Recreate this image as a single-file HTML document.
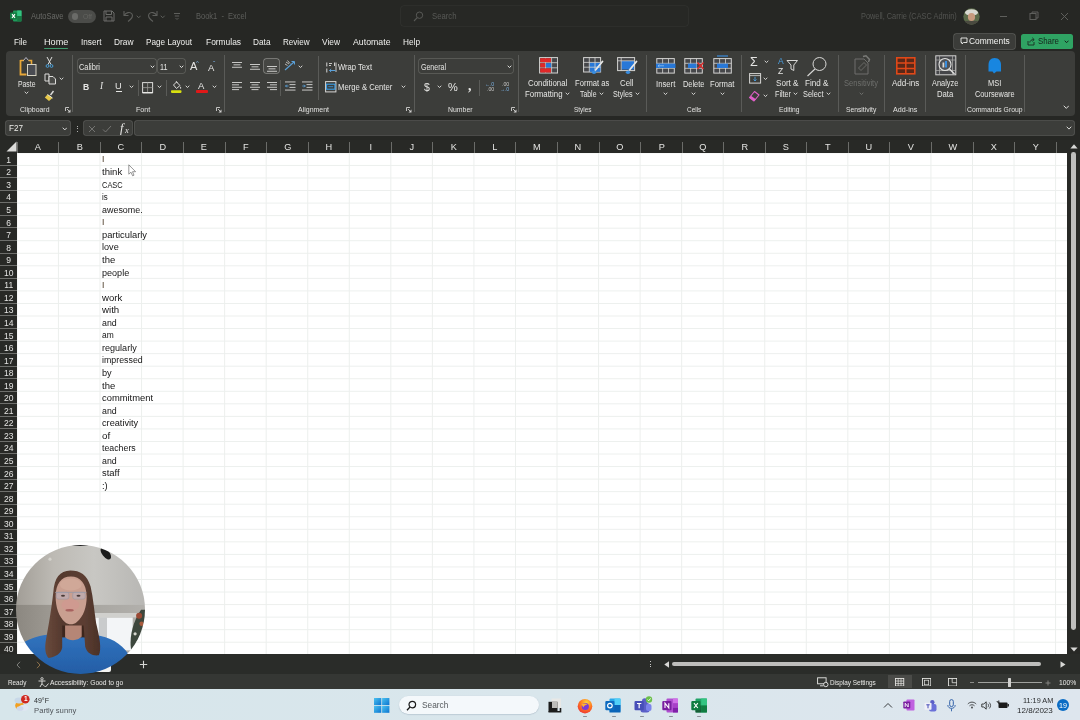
<!DOCTYPE html>
<html lang="en"><head><meta charset="utf-8"><title>Book1 - Excel</title>
<style>
html,body{margin:0;padding:0;}
body{width:1080px;height:720px;overflow:hidden;position:relative;background:#262724;font-family:"Liberation Sans", sans-serif;}
#root{position:absolute;left:0;top:0;width:1080px;height:720px;overflow:hidden;}
#root div,#root svg,#root span{position:absolute;display:block;}
#root span{white-space:pre;line-height:1;transform-origin:0 50%;}
</style></head><body><div id="root">
<div style="left:5.5px;top:51px;width:1069px;height:64.6px;background:#3c3d3a;border-radius:4px;"></div>
<div style="left:5.7px;top:121.4px;width:64.6px;height:13.8px;background:#3c3d3a;border-radius:2px;box-shadow:0 0 0 0.8px #585956;"></div>
<div style="left:84.2px;top:121.4px;width:47.6px;height:13.8px;background:#3c3d3a;border-radius:2px;box-shadow:0 0 0 0.8px #585956;"></div>
<div style="left:134.7px;top:121.4px;width:939.3px;height:13.8px;background:#3c3d3a;border-radius:2px;box-shadow:0 0 0 0.8px #585956;"></div>
<div style="left:0px;top:140px;width:1080px;height:12.5px;background:#282926;"></div>
<div style="left:0px;top:152.5px;width:17.2px;height:501.7px;background:#282926;"></div>
<div style="left:17.2px;top:152.5px;width:1050.1px;height:501.7px;background:#ffffff;background-image:linear-gradient(to right,#ecefed 0.8px,transparent 0.8px),linear-gradient(to bottom,#ecefed 0.8px,transparent 0.8px);background-size:41.56px 100%,100% 12.554px;background-position:40.96px 0,0 11.954px;"></div>
<div style="left:1067.3px;top:140px;width:12.7px;height:514.2px;background:#282926;"></div>
<div style="left:0px;top:654.2px;width:1080px;height:20.2px;background:#2a2c29;"></div>
<div style="left:0px;top:674.3px;width:1080px;height:14.4px;background:#353734;"></div>
<div style="left:0px;top:688.6px;width:1080px;height:31.4px;background:#dae6ec;background-image:linear-gradient(to right,#d7e6eb 0%,#d9e6ec 50%,#dee6ee 100%);"></div>
<div style="left:16.7px;top:141.5px;width:1px;height:11px;background:#6b6c69;"></div>
<div style="left:58.26px;top:141.5px;width:1px;height:11px;background:#6b6c69;"></div>
<div style="left:99.82px;top:141.5px;width:1px;height:11px;background:#6b6c69;"></div>
<div style="left:141.38px;top:141.5px;width:1px;height:11px;background:#6b6c69;"></div>
<div style="left:182.94px;top:141.5px;width:1px;height:11px;background:#6b6c69;"></div>
<div style="left:224.5px;top:141.5px;width:1px;height:11px;background:#6b6c69;"></div>
<div style="left:266.06px;top:141.5px;width:1px;height:11px;background:#6b6c69;"></div>
<div style="left:307.62px;top:141.5px;width:1px;height:11px;background:#6b6c69;"></div>
<div style="left:349.18px;top:141.5px;width:1px;height:11px;background:#6b6c69;"></div>
<div style="left:390.74px;top:141.5px;width:1px;height:11px;background:#6b6c69;"></div>
<div style="left:432.3px;top:141.5px;width:1px;height:11px;background:#6b6c69;"></div>
<div style="left:473.86px;top:141.5px;width:1px;height:11px;background:#6b6c69;"></div>
<div style="left:515.42px;top:141.5px;width:1px;height:11px;background:#6b6c69;"></div>
<div style="left:556.98px;top:141.5px;width:1px;height:11px;background:#6b6c69;"></div>
<div style="left:598.54px;top:141.5px;width:1px;height:11px;background:#6b6c69;"></div>
<div style="left:640.1px;top:141.5px;width:1px;height:11px;background:#6b6c69;"></div>
<div style="left:681.66px;top:141.5px;width:1px;height:11px;background:#6b6c69;"></div>
<div style="left:723.22px;top:141.5px;width:1px;height:11px;background:#6b6c69;"></div>
<div style="left:764.78px;top:141.5px;width:1px;height:11px;background:#6b6c69;"></div>
<div style="left:806.34px;top:141.5px;width:1px;height:11px;background:#6b6c69;"></div>
<div style="left:847.9px;top:141.5px;width:1px;height:11px;background:#6b6c69;"></div>
<div style="left:889.46px;top:141.5px;width:1px;height:11px;background:#6b6c69;"></div>
<div style="left:931.02px;top:141.5px;width:1px;height:11px;background:#6b6c69;"></div>
<div style="left:972.58px;top:141.5px;width:1px;height:11px;background:#6b6c69;"></div>
<div style="left:1014.14px;top:141.5px;width:1px;height:11px;background:#6b6c69;"></div>
<div style="left:1055.7px;top:141.5px;width:1px;height:11px;background:#6b6c69;"></div>
<svg style="left:6px;top:141px;" width="11" height="11" viewBox="0 0 11 11"><path d="M10.5 0.5 L10.5 10.5 L0.5 10.5 Z" fill="#dcdcda"/></svg>
<div style="left:0px;top:164.65px;width:17.2px;height:0.8px;background:#6e6f6c;"></div>
<div style="left:0px;top:177.21px;width:17.2px;height:0.8px;background:#6e6f6c;"></div>
<div style="left:0px;top:189.76px;width:17.2px;height:0.8px;background:#6e6f6c;"></div>
<div style="left:0px;top:202.32px;width:17.2px;height:0.8px;background:#6e6f6c;"></div>
<div style="left:0px;top:214.87px;width:17.2px;height:0.8px;background:#6e6f6c;"></div>
<div style="left:0px;top:227.42px;width:17.2px;height:0.8px;background:#6e6f6c;"></div>
<div style="left:0px;top:239.98px;width:17.2px;height:0.8px;background:#6e6f6c;"></div>
<div style="left:0px;top:252.53px;width:17.2px;height:0.8px;background:#6e6f6c;"></div>
<div style="left:0px;top:265.09px;width:17.2px;height:0.8px;background:#6e6f6c;"></div>
<div style="left:0px;top:277.64px;width:17.2px;height:0.8px;background:#6e6f6c;"></div>
<div style="left:0px;top:290.19px;width:17.2px;height:0.8px;background:#6e6f6c;"></div>
<div style="left:0px;top:302.75px;width:17.2px;height:0.8px;background:#6e6f6c;"></div>
<div style="left:0px;top:315.3px;width:17.2px;height:0.8px;background:#6e6f6c;"></div>
<div style="left:0px;top:327.86px;width:17.2px;height:0.8px;background:#6e6f6c;"></div>
<div style="left:0px;top:340.41px;width:17.2px;height:0.8px;background:#6e6f6c;"></div>
<div style="left:0px;top:352.96px;width:17.2px;height:0.8px;background:#6e6f6c;"></div>
<div style="left:0px;top:365.52px;width:17.2px;height:0.8px;background:#6e6f6c;"></div>
<div style="left:0px;top:378.07px;width:17.2px;height:0.8px;background:#6e6f6c;"></div>
<div style="left:0px;top:390.63px;width:17.2px;height:0.8px;background:#6e6f6c;"></div>
<div style="left:0px;top:403.18px;width:17.2px;height:0.8px;background:#6e6f6c;"></div>
<div style="left:0px;top:415.73px;width:17.2px;height:0.8px;background:#6e6f6c;"></div>
<div style="left:0px;top:428.29px;width:17.2px;height:0.8px;background:#6e6f6c;"></div>
<div style="left:0px;top:440.84px;width:17.2px;height:0.8px;background:#6e6f6c;"></div>
<div style="left:0px;top:453.4px;width:17.2px;height:0.8px;background:#6e6f6c;"></div>
<div style="left:0px;top:465.95px;width:17.2px;height:0.8px;background:#6e6f6c;"></div>
<div style="left:0px;top:478.5px;width:17.2px;height:0.8px;background:#6e6f6c;"></div>
<div style="left:0px;top:491.06px;width:17.2px;height:0.8px;background:#6e6f6c;"></div>
<div style="left:0px;top:503.61px;width:17.2px;height:0.8px;background:#6e6f6c;"></div>
<div style="left:0px;top:516.17px;width:17.2px;height:0.8px;background:#6e6f6c;"></div>
<div style="left:0px;top:528.72px;width:17.2px;height:0.8px;background:#6e6f6c;"></div>
<div style="left:0px;top:541.27px;width:17.2px;height:0.8px;background:#6e6f6c;"></div>
<div style="left:0px;top:553.83px;width:17.2px;height:0.8px;background:#6e6f6c;"></div>
<div style="left:0px;top:566.38px;width:17.2px;height:0.8px;background:#6e6f6c;"></div>
<div style="left:0px;top:578.94px;width:17.2px;height:0.8px;background:#6e6f6c;"></div>
<div style="left:0px;top:591.49px;width:17.2px;height:0.8px;background:#6e6f6c;"></div>
<div style="left:0px;top:604.04px;width:17.2px;height:0.8px;background:#6e6f6c;"></div>
<div style="left:0px;top:616.6px;width:17.2px;height:0.8px;background:#6e6f6c;"></div>
<div style="left:0px;top:629.15px;width:17.2px;height:0.8px;background:#6e6f6c;"></div>
<div style="left:0px;top:641.71px;width:17.2px;height:0.8px;background:#6e6f6c;"></div>
<svg style="left:10px;top:10px;" width="12" height="12" viewBox="0 0 12 12"><rect x="3" y="0.5" width="8.5" height="11" rx="1" fill="#1f9a5a"/><rect x="7.2" y="0.5" width="4.3" height="5.5" fill="#33c481"/><rect x="7.2" y="6" width="4.3" height="5.5" fill="#177a44"/><rect x="0" y="2.5" width="7" height="7" rx="1" fill="#107c41"/><path d="M2 4.2 L5 7.8 M5 4.2 L2 7.8" stroke="#fff" stroke-width="1.1"/></svg>
<div style="left:67.5px;top:9.5px;width:28.5px;height:13.5px;background:#4b4c49;border-radius:7px;"></div>
<div style="left:71.5px;top:13px;width:6.5px;height:6.5px;background:#6a6b68;border-radius:50%;"></div>
<svg style="left:102.5px;top:10px;" width="12" height="12" viewBox="0 0 12 12"><path d="M1 1 H9 L11 3 V11 H1 Z" fill="none" stroke="#6c6d6a" stroke-width="1"/><path d="M3 1 V4.5 H8.5 V1 M3 11 V7 H9 V11" fill="none" stroke="#6c6d6a" stroke-width="1"/></svg>
<svg style="left:122px;top:9px;" width="13" height="14" viewBox="0 0 13 14"><path d="M2 2 V6.5 H6.5" fill="none" stroke="#5e5f5c" stroke-width="1.1"/><path d="M2.3 6.2 C4 3.5 8 2.5 10 5 C11.5 7.5 9.5 10 6 12.5" fill="none" stroke="#5e5f5c" stroke-width="1.1"/></svg>
<svg style="left:135.8px;top:15.100000000000001px;" width="5.4" height="3.8" viewBox="0 0 5.4 3.8"><path d="M1 1 L2.7 2.8 L4.4 1" fill="none" stroke="#5e5f5c" stroke-width="1" stroke-linecap="round" stroke-linejoin="round"/></svg>
<svg style="left:146px;top:9px;" width="13" height="14" viewBox="0 0 13 14"><path d="M11 2 V6.5 H6.5" fill="none" stroke="#5e5f5c" stroke-width="1.1"/><path d="M10.7 6.2 C9 3.5 5 2.5 3 5 C1.5 7.5 3.5 10 7 12.5" fill="none" stroke="#5e5f5c" stroke-width="1.1"/></svg>
<svg style="left:160.3px;top:15.100000000000001px;" width="5.4" height="3.8" viewBox="0 0 5.4 3.8"><path d="M1 1 L2.7 2.8 L4.4 1" fill="none" stroke="#5e5f5c" stroke-width="1" stroke-linecap="round" stroke-linejoin="round"/></svg>
<svg style="left:173px;top:12px;" width="8" height="9" viewBox="0 0 8 9"><path d="M1 1.5 H7 M1.8 4 H6.2" stroke="#5e5f5c" stroke-width="1"/><path d="M2.5 6 L4 7.5 L5.5 6" fill="none" stroke="#5e5f5c" stroke-width="0.9"/></svg>
<div style="left:400.7px;top:5.5px;width:287.5px;height:20.5px;background:#272825;border-radius:3px;box-shadow:0 0 0 0.6px #353633;"></div>
<svg style="left:413px;top:11px;" width="11" height="11" viewBox="0 0 11 11"><circle cx="6.5" cy="4.2" r="3.2" fill="none" stroke="#585956" stroke-width="1"/><path d="M4.2 6.6 L1 10" stroke="#585956" stroke-width="1.1"/></svg>
<svg style="left:962.5px;top:7.5px;" width="17" height="17" viewBox="0 0 17 17"><defs><clipPath id="av"><circle cx="8.5" cy="8.5" r="8.2"/></clipPath></defs><g clip-path="url(#av)"><rect width="17" height="17" fill="#5b6a4a"/><ellipse cx="8.5" cy="4.5" rx="6.5" ry="3.2" fill="#d8d8d0"/><ellipse cx="8.5" cy="9" rx="3.6" ry="4" fill="#c79a7e"/><rect x="2" y="13" width="13" height="5" fill="#4a4a40"/></g></svg>
<div style="left:1000px;top:16px;width:7px;height:1px;background:#5e5f5c;"></div>
<svg style="left:1029px;top:11px;" width="10" height="10" viewBox="0 0 10 10"><rect x="1" y="2.5" width="6" height="6" fill="none" stroke="#5e5f5c" stroke-width="1"/><path d="M3 2.5 V1 H9 V7 H7" fill="none" stroke="#5e5f5c" stroke-width="1"/></svg>
<svg style="left:1060px;top:12px;" width="9" height="9" viewBox="0 0 9 9"><path d="M1 1 L8 8 M8 1 L1 8" stroke="#5e5f5c" stroke-width="1"/></svg>
<div style="left:43.5px;top:47.6px;width:24.5px;height:1.4px;background:#3f9a6c;border-radius:1px;"></div>
<div style="left:953.8px;top:34px;width:61.5px;height:14.6px;background:#3b3c39;border-radius:2.5px;box-shadow:0 0 0 0.7px #5c5d5a;"></div>
<svg style="left:959.5px;top:37px;" width="8" height="8" viewBox="0 0 8 8"><path d="M1 1 H7 V5.5 H3.5 L2 7 V5.5 H1 Z" fill="none" stroke="#f0f0ee" stroke-width="0.9" stroke-linejoin="round"/></svg>
<div style="left:1021px;top:34px;width:51.5px;height:14.8px;background:#2fa363;border-radius:2.5px;"></div>
<svg style="left:1026.5px;top:36.5px;" width="9" height="9" viewBox="0 0 9 9"><path d="M1 4 V8 H7 V5" fill="none" stroke="#1c2a22" stroke-width="0.9"/><path d="M2.8 5.5 C3 3.5 4.5 2.6 6.8 2.6 M5.3 0.8 L7.2 2.6 L5.3 4.4" fill="none" stroke="#1c2a22" stroke-width="0.9"/></svg>
<svg style="left:1063.7px;top:39.949999999999996px;" width="5.2" height="3.7" viewBox="0 0 5.2 3.7"><path d="M1 1 L2.6 2.7 L4.2 1" fill="none" stroke="#16221b" stroke-width="1" stroke-linecap="round" stroke-linejoin="round"/></svg>
<div style="left:72.1px;top:55px;width:0.8px;height:57px;background:#5a5b58;"></div>
<div style="left:224.2px;top:55px;width:0.8px;height:57px;background:#5a5b58;"></div>
<div style="left:413.6px;top:55px;width:0.8px;height:57px;background:#5a5b58;"></div>
<div style="left:518.1px;top:55px;width:0.8px;height:57px;background:#5a5b58;"></div>
<div style="left:646.1px;top:55px;width:0.8px;height:57px;background:#5a5b58;"></div>
<div style="left:741.1px;top:55px;width:0.8px;height:57px;background:#5a5b58;"></div>
<div style="left:837.6px;top:55px;width:0.8px;height:57px;background:#5a5b58;"></div>
<div style="left:884.1px;top:55px;width:0.8px;height:57px;background:#5a5b58;"></div>
<div style="left:924.6px;top:55px;width:0.8px;height:57px;background:#5a5b58;"></div>
<div style="left:965.1px;top:55px;width:0.8px;height:57px;background:#5a5b58;"></div>
<div style="left:1024.1px;top:55px;width:0.8px;height:57px;background:#5a5b58;"></div>
<svg style="left:18px;top:56px;" width="20" height="21" viewBox="0 0 20 21"><path d="M2.5 4.5 H6 M10.5 4.5 H13.5 V8" fill="none" stroke="#e8a838" stroke-width="1.6"/><path d="M2.5 4 V18.5 H8.5" fill="none" stroke="#e8a838" stroke-width="1.8"/><path d="M5.5 4.5 L8 1.5 L10.5 4.5" fill="none" stroke="#b8b8c8" stroke-width="1"/><rect x="9.5" y="8.5" width="8.5" height="11" fill="#4a4c52" stroke="#d8d4c4" stroke-width="1"/></svg>
<svg style="left:23.8px;top:91.4px;" width="5" height="3.6" viewBox="0 0 5 3.6"><path d="M1 1 L2.5 2.6 L4 1" fill="none" stroke="#d0d0ce" stroke-width="1" stroke-linecap="round" stroke-linejoin="round"/></svg>
<svg style="left:45px;top:56px;" width="9" height="13" viewBox="0 0 9 13"><path d="M2 1 L6 8.5 M7 1 L3 8.5" stroke="#e0e0de" stroke-width="1"/><circle cx="2.5" cy="10" r="1.4" fill="none" stroke="#4a9fd8" stroke-width="1"/><circle cx="6.5" cy="10" r="1.4" fill="none" stroke="#4a9fd8" stroke-width="1"/></svg>
<svg style="left:43.5px;top:72.5px;" width="13" height="12" viewBox="0 0 13 12"><path d="M1 1 H5 V8 H1 Z" fill="none" stroke="#dcdcda" stroke-width="1"/><path d="M5 3.5 H9 L11.5 6 V11 H5 Z" fill="#4a4b48" stroke="#dcdcda" stroke-width="1"/></svg>
<svg style="left:58.7px;top:76.7px;" width="5" height="3.6" viewBox="0 0 5 3.6"><path d="M1 1 L2.5 2.6 L4 1" fill="none" stroke="#d0d0ce" stroke-width="1" stroke-linecap="round" stroke-linejoin="round"/></svg>
<svg style="left:44px;top:90px;" width="12" height="12" viewBox="0 0 12 12"><path d="M9.5 1 L6.5 5" stroke="#dcdcda" stroke-width="1.4"/><path d="M3.5 4.5 L8.5 8 L5 11 L0.8 7.5 Z" fill="#e6c84a"/><path d="M3.5 4.5 L8.5 8" stroke="#f0f0e0" stroke-width="1"/></svg>
<svg style="left:65px;top:107px;" width="6" height="6" viewBox="0 0 6 6"><path d="M0.5 4 V0.5 H4" fill="none" stroke="#d0d0ce" stroke-width="0.9"/><path d="M5.5 2.5 V5.5 H2.5 Z" fill="#d0d0ce"/><path d="M2 2 L4.5 4.5" stroke="#d0d0ce" stroke-width="0.9"/></svg>
<div style="left:78.2px;top:58.8px;width:78px;height:14.6px;background:#3c3d3a;border-radius:2.5px;box-shadow:0 0 0 0.7px #62635f;"></div>
<div style="left:158.2px;top:58.8px;width:27.3px;height:14.6px;background:#3c3d3a;border-radius:2.5px;box-shadow:0 0 0 0.7px #62635f;"></div>
<svg style="left:149.5px;top:64.8px;" width="5" height="3.6" viewBox="0 0 5 3.6"><path d="M1 1 L2.5 2.6 L4 1" fill="none" stroke="#e0e0de" stroke-width="1" stroke-linecap="round" stroke-linejoin="round"/></svg>
<svg style="left:178.8px;top:64.8px;" width="5" height="3.6" viewBox="0 0 5 3.6"><path d="M1 1 L2.5 2.6 L4 1" fill="none" stroke="#e0e0de" stroke-width="1" stroke-linecap="round" stroke-linejoin="round"/></svg>
<div style="left:115.5px;top:91.3px;width:6px;height:0.9px;background:#e6e6e4;"></div>
<svg style="left:128.8px;top:85.2px;" width="5" height="3.6" viewBox="0 0 5 3.6"><path d="M1 1 L2.5 2.6 L4 1" fill="none" stroke="#d0d0ce" stroke-width="1" stroke-linecap="round" stroke-linejoin="round"/></svg>
<div style="left:138.1px;top:80px;width:0.8px;height:16px;background:#5a5b58;"></div>
<svg style="left:141.5px;top:81.5px;" width="12" height="12" viewBox="0 0 12 12"><rect x="0.6" y="0.6" width="10" height="10" fill="none" stroke="#dcdcda" stroke-width="1"/><path d="M5.6 0.6 V10.6 M0.6 5.6 H10.6" stroke="#9a9b98" stroke-width="0.8"/><path d="M0.6 10.8 H10.6" stroke="#f0f0ee" stroke-width="1.2"/></svg>
<svg style="left:156.5px;top:85.2px;" width="5" height="3.6" viewBox="0 0 5 3.6"><path d="M1 1 L2.5 2.6 L4 1" fill="none" stroke="#d0d0ce" stroke-width="1" stroke-linecap="round" stroke-linejoin="round"/></svg>
<div style="left:165.9px;top:80px;width:0.8px;height:16px;background:#5a5b58;"></div>
<svg style="left:170px;top:80px;" width="13" height="14" viewBox="0 0 13 14"><path d="M3.5 5 L6.5 2 L10 5.5 L6.5 8.5 Z" fill="none" stroke="#dcdcda" stroke-width="1"/><path d="M6 1 L7.5 3" stroke="#dcdcda" stroke-width="0.9"/><path d="M10.6 6.5 C11.4 7.6 11.4 8.6 10.6 8.8 C9.8 8.6 9.8 7.6 10.6 6.5" fill="#dcdcda"/><rect x="1" y="10.3" width="10.5" height="2.6" rx="0.8" fill="#d8e010"/></svg>
<svg style="left:184.8px;top:85.2px;" width="5" height="3.6" viewBox="0 0 5 3.6"><path d="M1 1 L2.5 2.6 L4 1" fill="none" stroke="#d0d0ce" stroke-width="1" stroke-linecap="round" stroke-linejoin="round"/></svg>
<div style="left:195.5px;top:90.3px;width:12.5px;height:2.5px;background:#e01818;border-radius:1px;"></div>
<svg style="left:211.5px;top:85.2px;" width="5" height="3.6" viewBox="0 0 5 3.6"><path d="M1 1 L2.5 2.6 L4 1" fill="none" stroke="#d0d0ce" stroke-width="1" stroke-linecap="round" stroke-linejoin="round"/></svg>
<svg style="left:216px;top:107px;" width="6" height="6" viewBox="0 0 6 6"><path d="M0.5 4 V0.5 H4" fill="none" stroke="#d0d0ce" stroke-width="0.9"/><path d="M5.5 2.5 V5.5 H2.5 Z" fill="#d0d0ce"/><path d="M2 2 L4.5 4.5" stroke="#d0d0ce" stroke-width="0.9"/></svg>
<svg style="left:232px;top:61.5px;" width="10" height="8.2" viewBox="0 0 10 8.2"><rect x="0.0" y="0.0" width="10" height="0.9" fill="#d8d8d6"/><rect x="1.5" y="2.4" width="7" height="0.9" fill="#d8d8d6"/><rect x="0.0" y="4.8" width="10" height="0.9" fill="#d8d8d6"/></svg>
<svg style="left:249.5px;top:63.5px;" width="10" height="8.2" viewBox="0 0 10 8.2"><rect x="0.0" y="0.0" width="10" height="0.9" fill="#d8d8d6"/><rect x="1.5" y="2.4" width="7" height="0.9" fill="#d8d8d6"/><rect x="0.0" y="4.8" width="10" height="0.9" fill="#d8d8d6"/></svg>
<div style="left:264.2px;top:58.8px;width:14.8px;height:14.6px;background:#454643;border-radius:2.5px;box-shadow:0 0 0 0.7px #8a8b88;"></div>
<svg style="left:267px;top:65.5px;" width="10" height="8.2" viewBox="0 0 10 8.2"><rect x="0.0" y="0.0" width="10" height="0.9" fill="#d8d8d6"/><rect x="1.5" y="2.4" width="7" height="0.9" fill="#d8d8d6"/><rect x="0.0" y="4.8" width="10" height="0.9" fill="#d8d8d6"/></svg>
<svg style="left:283px;top:59px;" width="15" height="14" viewBox="0 0 15 14"><path d="M2 11 L11 3" stroke="#5aa0d8" stroke-width="1.2"/><path d="M8.5 2.5 L11.5 2.5 L11.5 5.5" fill="none" stroke="#5aa0d8" stroke-width="1"/><path d="M3 3 L6 5 M4.5 1.5 L7 4.5 M2 5 L4.5 6.5" stroke="#d8d8d6" stroke-width="0.8"/></svg>
<svg style="left:298.0px;top:64.8px;" width="5" height="3.6" viewBox="0 0 5 3.6"><path d="M1 1 L2.5 2.6 L4 1" fill="none" stroke="#d0d0ce" stroke-width="1" stroke-linecap="round" stroke-linejoin="round"/></svg>
<svg style="left:232px;top:81.5px;" width="10" height="10.6" viewBox="0 0 10 10.6"><rect x="0" y="0.0" width="10" height="0.9" fill="#d8d8d6"/><rect x="0" y="2.4" width="7" height="0.9" fill="#d8d8d6"/><rect x="0" y="4.8" width="10" height="0.9" fill="#d8d8d6"/><rect x="0" y="7.199999999999999" width="7" height="0.9" fill="#d8d8d6"/></svg>
<svg style="left:249.5px;top:81.5px;" width="10" height="10.6" viewBox="0 0 10 10.6"><rect x="0.0" y="0.0" width="10" height="0.9" fill="#d8d8d6"/><rect x="1.5" y="2.4" width="7" height="0.9" fill="#d8d8d6"/><rect x="0.0" y="4.8" width="10" height="0.9" fill="#d8d8d6"/><rect x="1.5" y="7.199999999999999" width="7" height="0.9" fill="#d8d8d6"/></svg>
<svg style="left:266.5px;top:81.5px;" width="10" height="10.6" viewBox="0 0 10 10.6"><rect x="0" y="0.0" width="10" height="0.9" fill="#d8d8d6"/><rect x="3" y="2.4" width="7" height="0.9" fill="#d8d8d6"/><rect x="0" y="4.8" width="10" height="0.9" fill="#d8d8d6"/><rect x="3" y="7.199999999999999" width="7" height="0.9" fill="#d8d8d6"/></svg>
<div style="left:280.1px;top:80px;width:0.8px;height:16px;background:#5a5b58;"></div>
<svg style="left:285px;top:81px;" width="11" height="11" viewBox="0 0 11 11"><rect x="0" y="0.5" width="10.5" height="0.9" fill="#d8d8d6"/><rect x="4.5" y="3.2" width="6" height="0.9" fill="#d8d8d6"/><rect x="4.5" y="5.9" width="6" height="0.9" fill="#d8d8d6"/><rect x="0" y="8.6" width="10.5" height="0.9" fill="#d8d8d6"/><path d="M3.5 5 H0.5 M1.8 3.7 L0.5 5 L1.8 6.3" fill="none" stroke="#5aa0d8" stroke-width="0.9"/></svg>
<svg style="left:302px;top:81px;" width="11" height="11" viewBox="0 0 11 11"><rect x="0" y="0.5" width="10.5" height="0.9" fill="#d8d8d6"/><rect x="4.5" y="3.2" width="6" height="0.9" fill="#d8d8d6"/><rect x="4.5" y="5.9" width="6" height="0.9" fill="#d8d8d6"/><rect x="0" y="8.6" width="10.5" height="0.9" fill="#d8d8d6"/><path d="M0.3 5 H3.3 M2 3.7 L3.3 5 L2 6.3" fill="none" stroke="#5aa0d8" stroke-width="0.9"/></svg>
<div style="left:317.9px;top:56px;width:0.8px;height:44px;background:#5a5b58;"></div>
<svg style="left:326px;top:61.5px;" width="11" height="11" viewBox="0 0 11 11"><path d="M0.8 0.5 V4.5 M0.8 6.5 V10.5" stroke="#d8d8d6" stroke-width="1"/><path d="M3 1.5 H6 M3 3.5 H5" stroke="#d8d8d6" stroke-width="0.9"/><path d="M8.5 0.5 V4 M10 0.5 V10" stroke="#d8d8d6" stroke-width="0.9"/><path d="M9.5 8.5 H3.5 M5.2 7 L3.5 8.5 L5.2 10" fill="none" stroke="#5aa0d8" stroke-width="1"/></svg>
<svg style="left:324.5px;top:81px;" width="12" height="12" viewBox="0 0 12 12"><rect x="0.6" y="0.6" width="10.3" height="10.3" fill="none" stroke="#d8d8d6" stroke-width="1"/><rect x="1.6" y="3.2" width="8.3" height="5" fill="#3c3d3a" stroke="#3a9ee8" stroke-width="1.1"/><path d="M3.3 5.7 H8.2" stroke="#3a9ee8" stroke-width="0.8"/></svg>
<svg style="left:400.5px;top:85.4px;" width="5" height="3.6" viewBox="0 0 5 3.6"><path d="M1 1 L2.5 2.6 L4 1" fill="none" stroke="#d0d0ce" stroke-width="1" stroke-linecap="round" stroke-linejoin="round"/></svg>
<svg style="left:406px;top:107px;" width="6" height="6" viewBox="0 0 6 6"><path d="M0.5 4 V0.5 H4" fill="none" stroke="#d0d0ce" stroke-width="0.9"/><path d="M5.5 2.5 V5.5 H2.5 Z" fill="#d0d0ce"/><path d="M2 2 L4.5 4.5" stroke="#d0d0ce" stroke-width="0.9"/></svg>
<div style="left:419.2px;top:58.8px;width:94px;height:14.6px;background:#3c3d3a;border-radius:2.5px;box-shadow:0 0 0 0.7px #62635f;"></div>
<svg style="left:506.8px;top:64.8px;" width="5" height="3.6" viewBox="0 0 5 3.6"><path d="M1 1 L2.5 2.6 L4 1" fill="none" stroke="#e0e0de" stroke-width="1" stroke-linecap="round" stroke-linejoin="round"/></svg>
<svg style="left:436.7px;top:85.4px;" width="5" height="3.6" viewBox="0 0 5 3.6"><path d="M1 1 L2.5 2.6 L4 1" fill="none" stroke="#d0d0ce" stroke-width="1" stroke-linecap="round" stroke-linejoin="round"/></svg>
<div style="left:478.9px;top:80px;width:0.8px;height:16px;background:#5a5b58;"></div>
<svg style="left:511px;top:107px;" width="6" height="6" viewBox="0 0 6 6"><path d="M0.5 4 V0.5 H4" fill="none" stroke="#d0d0ce" stroke-width="0.9"/><path d="M5.5 2.5 V5.5 H2.5 Z" fill="#d0d0ce"/><path d="M2 2 L4.5 4.5" stroke="#d0d0ce" stroke-width="0.9"/></svg>
<svg style="left:538.5px;top:57px;" width="19.5" height="17" viewBox="0 0 19.5 17"><rect x="0.6" y="0.6" width="18" height="15.4" fill="#46474a" stroke="#d4d4d2" stroke-width="1"/><path d="M0.6 5.7 H18.6 M0.6 10.8 H18.6 M6.6 0.6 V16 M12.6 0.6 V16" stroke="#d4d4d2" stroke-width="0.8"/><rect x="1.2" y="1.2" width="10.8" height="4" fill="#e02828"/><rect x="1.2" y="6.2" width="5" height="4.2" fill="#e02828"/><rect x="7" y="6.2" width="5.2" height="4.2" fill="#2878d8"/><rect x="1.2" y="11.3" width="10.8" height="4.2" fill="#e02828"/></svg>
<svg style="left:565.0px;top:91.7px;" width="5" height="3.6" viewBox="0 0 5 3.6"><path d="M1 1 L2.5 2.6 L4 1" fill="none" stroke="#d0d0ce" stroke-width="1" stroke-linecap="round" stroke-linejoin="round"/></svg>
<svg style="left:583px;top:57px;" width="21" height="18" viewBox="0 0 21 18"><rect x="0.6" y="0.6" width="17" height="14.4" fill="#46474a" stroke="#d4d4d2" stroke-width="1"/><rect x="6.5" y="5.5" width="11" height="9.3" fill="#2878d8"/><path d="M0.6 5.4 H17.6 M0.6 10.2 H17.6 M6.3 0.6 V15 M12 0.6 V15" stroke="#d4d4d2" stroke-width="0.8"/><path d="M19.5 4.5 L12.5 13" stroke="#e8e8e6" stroke-width="1.8" stroke-linecap="round"/><path d="M12.8 12.5 L10.5 16.5 L9 15.5 Z" fill="#3a8ee0"/><ellipse cx="11" cy="15.3" rx="2.2" ry="1.6" fill="#3a8ee0"/></svg>
<svg style="left:599.0px;top:91.7px;" width="5" height="3.6" viewBox="0 0 5 3.6"><path d="M1 1 L2.5 2.6 L4 1" fill="none" stroke="#d0d0ce" stroke-width="1" stroke-linecap="round" stroke-linejoin="round"/></svg>
<svg style="left:617px;top:57px;" width="21" height="18" viewBox="0 0 21 18"><rect x="0.6" y="0.6" width="17" height="13" fill="#46474a" stroke="#d4d4d2" stroke-width="1"/><rect x="4.5" y="4" width="12.5" height="8.5" fill="#2878d8"/><path d="M0.6 3.8 H17.6 M4.2 0.6 V13.6" stroke="#d4d4d2" stroke-width="0.8"/><path d="M19.5 4.5 L12.5 13" stroke="#e8e8e6" stroke-width="1.8" stroke-linecap="round"/><ellipse cx="11" cy="15.3" rx="2.2" ry="1.6" fill="#3a8ee0"/><path d="M12.8 12.5 L10.5 16.5 L9 15.5 Z" fill="#3a8ee0"/></svg>
<svg style="left:634.5px;top:91.7px;" width="5" height="3.6" viewBox="0 0 5 3.6"><path d="M1 1 L2.5 2.6 L4 1" fill="none" stroke="#d0d0ce" stroke-width="1" stroke-linecap="round" stroke-linejoin="round"/></svg>
<svg style="left:656px;top:57.5px;" width="20" height="16" viewBox="0 0 20 16"><rect x="0.8" y="0.6" width="17.5" height="14.5" fill="#46474a" stroke="#d4d4d2" stroke-width="1"/><path d="M0.8 5.3 H18.3 M0.8 10.3 H18.3 M6.6 0.6 V15 M12.5 0.6 V15" stroke="#d4d4d2" stroke-width="0.8"/><rect x="0" y="5.6" width="19.5" height="4.4" fill="#2878d8"/><path d="M2 7.8 H8 M3.5 6.5 L2 7.8 L3.5 9.1" stroke="#9cc8f0" stroke-width="0.7" fill="none"/></svg>
<svg style="left:663.0px;top:91.60000000000001px;" width="5" height="3.6" viewBox="0 0 5 3.6"><path d="M1 1 L2.5 2.6 L4 1" fill="none" stroke="#d0d0ce" stroke-width="1" stroke-linecap="round" stroke-linejoin="round"/></svg>
<svg style="left:684px;top:57.5px;" width="21" height="16" viewBox="0 0 21 16"><rect x="0.8" y="0.6" width="17.5" height="14.5" fill="#46474a" stroke="#d4d4d2" stroke-width="1"/><path d="M0.8 5.3 H18.3 M0.8 10.3 H18.3 M6.6 0.6 V15 M12.5 0.6 V15" stroke="#d4d4d2" stroke-width="0.8"/><rect x="4" y="5.6" width="8.5" height="4.4" fill="#2878d8"/><path d="M13.5 4.5 L19.5 11 M19.5 4.5 L13.5 11" stroke="#e02828" stroke-width="1.3"/></svg>
<svg style="left:690.8px;top:91.60000000000001px;" width="5" height="3.6" viewBox="0 0 5 3.6"><path d="M1 1 L2.5 2.6 L4 1" fill="none" stroke="#d0d0ce" stroke-width="1" stroke-linecap="round" stroke-linejoin="round"/></svg>
<svg style="left:713px;top:54.5px;" width="20" height="19" viewBox="0 0 20 19"><path d="M4 1 H15" stroke="#3a8ee0" stroke-width="1.2"/><rect x="0.8" y="3.6" width="17.5" height="14.5" fill="#46474a" stroke="#d4d4d2" stroke-width="1"/><path d="M0.8 8.3 H18.3 M0.8 13.3 H18.3 M6.6 3.6 V18 M12.5 3.6 V18" stroke="#d4d4d2" stroke-width="0.8"/><rect x="4" y="8.6" width="11" height="4.4" fill="#2878d8"/></svg>
<svg style="left:719.8px;top:91.60000000000001px;" width="5" height="3.6" viewBox="0 0 5 3.6"><path d="M1 1 L2.5 2.6 L4 1" fill="none" stroke="#d0d0ce" stroke-width="1" stroke-linecap="round" stroke-linejoin="round"/></svg>
<svg style="left:763.8px;top:60.0px;" width="5" height="3.6" viewBox="0 0 5 3.6"><path d="M1 1 L2.5 2.6 L4 1" fill="none" stroke="#d0d0ce" stroke-width="1" stroke-linecap="round" stroke-linejoin="round"/></svg>
<svg style="left:748.5px;top:72.5px;" width="13" height="11" viewBox="0 0 13 11"><rect x="0.6" y="0.6" width="11" height="9.5" fill="none" stroke="#d8d8d6" stroke-width="1"/><path d="M0.6 2.6 H11.6" stroke="#d8d8d6" stroke-width="0.8"/><path d="M6 3.8 V8 M4.5 6.5 L6 8 L7.5 6.5" fill="none" stroke="#4a9fe0" stroke-width="0.9"/></svg>
<svg style="left:763.0px;top:76.5px;" width="5" height="3.6" viewBox="0 0 5 3.6"><path d="M1 1 L2.5 2.6 L4 1" fill="none" stroke="#d0d0ce" stroke-width="1" stroke-linecap="round" stroke-linejoin="round"/></svg>
<svg style="left:748px;top:89.5px;" width="13" height="13" viewBox="0 0 13 13"><path d="M6.5 1.5 L11 5 L6 11 L1.5 7.5 Z" fill="none" stroke="#e060c8" stroke-width="1.1" stroke-linejoin="round"/><path d="M3.3 6 L7.8 9.2 L6 11 L1.5 7.5 Z" fill="#e060c8"/></svg>
<svg style="left:763.0px;top:93.7px;" width="5" height="3.6" viewBox="0 0 5 3.6"><path d="M1 1 L2.5 2.6 L4 1" fill="none" stroke="#d0d0ce" stroke-width="1" stroke-linecap="round" stroke-linejoin="round"/></svg>
<svg style="left:786px;top:59px;" width="13" height="14" viewBox="0 0 13 14"><path d="M1 1.5 H11.5 L7.8 6 V11.5 L5 10 V6 Z" fill="none" stroke="#d8d8d6" stroke-width="1" stroke-linejoin="round"/></svg>
<svg style="left:793.3px;top:91.7px;" width="5" height="3.6" viewBox="0 0 5 3.6"><path d="M1 1 L2.5 2.6 L4 1" fill="none" stroke="#d0d0ce" stroke-width="1" stroke-linecap="round" stroke-linejoin="round"/></svg>
<svg style="left:806px;top:56px;" width="22" height="21" viewBox="0 0 22 21"><circle cx="13.5" cy="8" r="6.5" fill="none" stroke="#d8d8d6" stroke-width="1"/><path d="M9 13 L1.5 20" stroke="#d8d8d6" stroke-width="1.1"/></svg>
<svg style="left:825.5px;top:91.7px;" width="5" height="3.6" viewBox="0 0 5 3.6"><path d="M1 1 L2.5 2.6 L4 1" fill="none" stroke="#d0d0ce" stroke-width="1" stroke-linecap="round" stroke-linejoin="round"/></svg>
<svg style="left:852px;top:55px;" width="22" height="20" viewBox="0 0 22 20"><path d="M3 4 H12 L16 8 V19 H3 Z" fill="none" stroke="#6e6f6c" stroke-width="1"/><path d="M6.5 13 L12 7.5 L14.5 10 L9 15.5 Z" fill="none" stroke="#6e6f6c" stroke-width="0.9"/><path d="M11 1.5 L14 0.8 L17.5 4.5 L16.5 7" fill="none" stroke="#7a7b78" stroke-width="1.4"/></svg>
<svg style="left:858.8px;top:91.60000000000001px;" width="5" height="3.6" viewBox="0 0 5 3.6"><path d="M1 1 L2.5 2.6 L4 1" fill="none" stroke="#6e6f6c" stroke-width="1" stroke-linecap="round" stroke-linejoin="round"/></svg>
<svg style="left:896px;top:57px;" width="20" height="18" viewBox="0 0 20 18"><rect x="0.8" y="0.8" width="18" height="16" fill="#5a2818" stroke="#e04818" stroke-width="1.6"/><path d="M9.8 0.8 V16.8 M0.8 6 H18.8 M0.8 11.5 H18.8" stroke="#e04818" stroke-width="1.5"/></svg>
<svg style="left:934.5px;top:55px;" width="22" height="21" viewBox="0 0 22 21"><rect x="0.8" y="0.8" width="20" height="19" fill="#46474a" stroke="#d4d4d2" stroke-width="1"/><path d="M0.8 5 H20.8 M0.8 15.5 H20.8 M4.5 0.8 V19.8 M17.5 0.8 V19.8" stroke="#b0b0ae" stroke-width="0.7"/><circle cx="10" cy="9.5" r="6" fill="#505258" stroke="#e0e0de" stroke-width="1.1"/><rect x="7.5" y="7.5" width="1.8" height="5" fill="#d8d8d6"/><rect x="10" y="6" width="2" height="6.5" fill="#3a8ee0"/><path d="M14.5 14 L19.5 19" stroke="#e0e0de" stroke-width="1.4"/></svg>
<svg style="left:986px;top:57px;" width="17" height="17" viewBox="0 0 17 17"><path d="M8.5 1 C13 1 15.5 4.5 15 9 V14.5 H10.5 L8 16.5 L6.5 14.5 H2.5 V8 C2.5 4 4.5 1 8.5 1 Z" fill="#1886e0"/></svg>
<svg style="left:1062.7px;top:105.0px;" width="6.6" height="4.4" viewBox="0 0 6.6 4.4"><path d="M1 1 L3.3 3.4 L5.6 1" fill="none" stroke="#e0e0de" stroke-width="1" stroke-linecap="round" stroke-linejoin="round"/></svg>
<svg style="left:61.5px;top:126.64999999999999px;" width="5.6" height="3.9" viewBox="0 0 5.6 3.9"><path d="M1 1 L2.8 2.9 L4.6 1" fill="none" stroke="#d8d8d6" stroke-width="1" stroke-linecap="round" stroke-linejoin="round"/></svg>
<div style="left:77px;top:125.5px;width:1.1px;height:1.1px;background:#b0b0ae;"></div>
<div style="left:77px;top:128.3px;width:1.1px;height:1.1px;background:#b0b0ae;"></div>
<div style="left:77px;top:131.1px;width:1.1px;height:1.1px;background:#b0b0ae;"></div>
<svg style="left:88px;top:124.5px;" width="8" height="8" viewBox="0 0 8 8"><path d="M1 1 L7 7 M7 1 L1 7" stroke="#7a7b78" stroke-width="0.9"/></svg>
<svg style="left:102px;top:124.5px;" width="10" height="8" viewBox="0 0 10 8"><path d="M1 4.5 L3.5 7 L9 1" fill="none" stroke="#7a7b78" stroke-width="0.9"/></svg>
<svg style="left:1066.0px;top:126.25000000000001px;" width="6" height="4.1" viewBox="0 0 6 4.1"><path d="M1 1 L3.0 3.1 L5 1" fill="none" stroke="#d8d8d6" stroke-width="1" stroke-linecap="round" stroke-linejoin="round"/></svg>
<svg style="left:1069.5px;top:143.5px;" width="8" height="5" viewBox="0 0 8 5"><path d="M4 0.3 L7.6 4.6 H0.4 Z" fill="#d8d8d6"/></svg>
<div style="left:1071px;top:151.8px;width:4.8px;height:478.5px;background:#bebebc;border-radius:2.4px;"></div>
<svg style="left:1069.5px;top:646.5px;" width="8" height="5" viewBox="0 0 8 5"><path d="M4 4.6 L7.6 0.4 H0.4 Z" fill="#d8d8d6"/></svg>
<div style="left:650px;top:661px;width:1.1px;height:1.1px;background:#c8c8c6;"></div>
<div style="left:650px;top:663.6px;width:1.1px;height:1.1px;background:#c8c8c6;"></div>
<div style="left:650px;top:666.2px;width:1.1px;height:1.1px;background:#c8c8c6;"></div>
<svg style="left:664px;top:660.8px;" width="5.5" height="7" viewBox="0 0 5.5 7"><path d="M0.3 3.5 L5 0.3 V6.7 Z" fill="#d8d8d6"/></svg>
<div style="left:671.8px;top:661.6px;width:369.5px;height:4.8px;background:#bebebc;border-radius:2.4px;"></div>
<svg style="left:1059.5px;top:660.5px;" width="6" height="7" viewBox="0 0 6 7"><path d="M5.5 3.5 L0.5 0.3 V6.7 Z" fill="#d8d8d6"/></svg>
<svg style="left:15.5px;top:660.5px;" width="5" height="8" viewBox="0 0 5 8"><path d="M4 0.8 L1 4 L4 7.2" fill="none" stroke="#8a8b88" stroke-width="0.9"/></svg>
<svg style="left:36px;top:660.5px;" width="5" height="8" viewBox="0 0 5 8"><path d="M1 0.8 L4 4 L1 7.2" fill="none" stroke="#9a7a50" stroke-width="0.9"/></svg>
<svg style="left:139px;top:660px;" width="9" height="9" viewBox="0 0 9 9"><path d="M4.5 0.8 V8.2 M0.8 4.5 H8.2" stroke="#d8d8d6" stroke-width="1.1"/></svg>
<div style="left:75px;top:656px;width:35.5px;height:15.8px;background:#f4f4f2;border-radius:0 0 2px 2px;"></div>
<svg style="left:37.5px;top:677px;" width="11" height="11" viewBox="0 0 11 11"><circle cx="4" cy="1.8" r="1.2" fill="none" stroke="#e8e8e6" stroke-width="0.8"/><path d="M0.5 4 H7.5 M4 4 V6.5 M4 6.5 L2 10 M4 6.5 L5.5 8.5" fill="none" stroke="#e8e8e6" stroke-width="0.9"/><path d="M6 8.5 L7.5 10 L10.5 6.5" fill="none" stroke="#e8e8e6" stroke-width="0.9"/></svg>
<svg style="left:816.5px;top:677px;" width="12" height="11" viewBox="0 0 12 11"><rect x="0.6" y="0.8" width="8.5" height="6" fill="none" stroke="#e8e8e6" stroke-width="0.9"/><path d="M3 8.8 H6.5" stroke="#e8e8e6" stroke-width="0.9"/><circle cx="8.8" cy="7.5" r="2.2" fill="#353734" stroke="#e8e8e6" stroke-width="0.9"/></svg>
<div style="left:888px;top:675.3px;width:24px;height:12.4px;background:#4a4b48;"></div>
<svg style="left:895.4px;top:677.5px;" width="9.2" height="8.6" viewBox="0 0 11 10"><rect x="0.5" y="0.5" width="10" height="9" fill="none" stroke="#ecece9" stroke-width="1"/><path d="M0.5 3.5 H10.5 M0.5 6.5 H10.5 M3.8 0.5 V9.5 M7.2 0.5 V9.5" stroke="#ecece9" stroke-width="0.8"/></svg>
<svg style="left:922px;top:677.5px;" width="9.2" height="8.6" viewBox="0 0 11 10"><rect x="0.5" y="0.5" width="10" height="9" fill="none" stroke="#ecece9" stroke-width="1"/><rect x="3" y="2.5" width="5" height="5.5" fill="none" stroke="#ecece9" stroke-width="0.8"/></svg>
<svg style="left:948px;top:677.5px;" width="9.2" height="8.6" viewBox="0 0 11 10"><rect x="0.5" y="0.5" width="10" height="9" fill="none" stroke="#ecece9" stroke-width="1"/><path d="M5 0.5 V5.5 H10.5" fill="none" stroke="#ecece9" stroke-width="0.9"/></svg>
<div style="left:969.5px;top:682px;width:4px;height:0.9px;background:#8a8b88;"></div>
<div style="left:978px;top:682px;width:63.5px;height:0.9px;background:#a0a19e;"></div>
<div style="left:1008.3px;top:677.8px;width:2.4px;height:9px;background:#d0d0ce;border-radius:0.6px;"></div>
<svg style="left:1044.5px;top:679.5px;" width="6" height="6" viewBox="0 0 6 6"><path d="M3 0.5 V5.5 M0.5 3 H5.5" stroke="#8a8b88" stroke-width="0.9"/></svg>
<svg style="left:13px;top:695px;" width="17" height="18" viewBox="0 0 17 18"><circle cx="6.5" cy="10.5" r="4.3" fill="#f2a020"/><ellipse cx="6" cy="5.5" rx="4.5" ry="3" fill="#c8d8e8"/><ellipse cx="10.5" cy="12.8" rx="5" ry="3" fill="#dfe6f2"/><ellipse cx="7" cy="13.5" rx="3.5" ry="2.3" fill="#cfd8ea"/><circle cx="12.3" cy="4.3" r="4.3" fill="#d02820"/></svg>
<svg style="left:374px;top:698px;" width="15.5" height="15" viewBox="0 0 15.5 15"><defs><linearGradient id="wg" x1="0" y1="0" x2="1" y2="1"><stop offset="0" stop-color="#4cc2f0"/><stop offset="1" stop-color="#0a74d0"/></linearGradient></defs><rect x="0" y="0" width="7.3" height="7" fill="url(#wg)"/><rect x="8.1" y="0" width="7.3" height="7" fill="url(#wg)"/><rect x="0" y="7.8" width="7.3" height="7" fill="url(#wg)"/><rect x="8.1" y="7.8" width="7.3" height="7" fill="url(#wg)"/></svg>
<div style="left:399px;top:696px;width:139.5px;height:18.3px;background:#f4f8fb;border-radius:9.2px;box-shadow:0 0.5px 1px rgba(120,140,160,0.5);"></div>
<svg style="left:405.5px;top:699.5px;" width="11" height="11" viewBox="0 0 11 11"><circle cx="6.3" cy="4.6" r="3.3" fill="none" stroke="#1a1a1a" stroke-width="1.2"/><path d="M4 7 L1 10.2" stroke="#1a1a1a" stroke-width="1.3"/></svg>
<svg style="left:548px;top:698px;" width="13.5" height="14.5" viewBox="0 0 13.5 14.5"><rect x="3.5" y="0.5" width="9.5" height="9.5" fill="#e8e8e6"/><rect x="0.5" y="3.8" width="9" height="10" fill="#1c1c1c"/><rect x="4" y="3.8" width="5.5" height="6.2" fill="#bcbcba"/><path d="M0.5 13.8 H12.5 V10" fill="none" stroke="#1c1c1c" stroke-width="1.6"/></svg>
<svg style="left:577px;top:697.5px;" width="16" height="16" viewBox="0 0 16 16"><defs><radialGradient id="ff" cx="0.6" cy="0.25" r="0.9"><stop offset="0" stop-color="#ffd43a"/><stop offset="0.45" stop-color="#ff7a20"/><stop offset="1" stop-color="#e8203a"/></radialGradient></defs><circle cx="8" cy="8.2" r="7.3" fill="url(#ff)"/><circle cx="8.3" cy="8.5" r="3.6" fill="#7a3ad8"/><path d="M4.5 6.5 C6 5 9 5.2 10.5 6.8 C9 6.5 7 7.5 6.5 9.5 Z" fill="#ffb030"/></svg>
<svg style="left:605px;top:697.5px;" width="16" height="15.5" viewBox="0 0 16 15.5"><rect x="4.5" y="0.5" width="11" height="13.5" rx="1" fill="#28a8ea"/><rect x="4.5" y="7" width="11" height="7.5" fill="#0a64b8"/><rect x="9.5" y="0.5" width="6" height="6.5" fill="#50d0f8"/><rect x="0.3" y="3" width="9.2" height="9.2" rx="1" fill="#0f6cc0"/><circle cx="4.9" cy="7.6" r="2.3" fill="none" stroke="#fff" stroke-width="1.2"/></svg>
<svg style="left:633.5px;top:696px;" width="19" height="17.5" viewBox="0 0 19 17.5"><circle cx="10.8" cy="5" r="2.8" fill="#5b5fc7"/><rect x="6.5" y="7" width="9" height="9.5" rx="2.5" fill="#5b5fc7"/><rect x="12" y="8" width="5.5" height="7" rx="2" fill="#7b83eb"/><rect x="0.5" y="5" width="9.3" height="9.3" rx="1" fill="#464eb8"/><path d="M3 7.5 H7.3 M5.15 7.5 V12.3" stroke="#fff" stroke-width="1.2"/><circle cx="15" cy="3.5" r="3.2" fill="#6cc04a"/><path d="M13.5 3.6 L14.7 4.8 L16.6 2.4" fill="none" stroke="#fff" stroke-width="0.9"/></svg>
<svg style="left:662px;top:697.5px;" width="16.5" height="15.5" viewBox="0 0 16.5 15.5"><rect x="4.5" y="0.5" width="11.5" height="14" rx="1" fill="#b050d0"/><rect x="11" y="0.5" width="5" height="4.8" fill="#d070e8"/><rect x="11" y="5.3" width="5" height="4.6" fill="#a840c8"/><rect x="11" y="9.9" width="5" height="4.6" fill="#8020a8"/><rect x="0.3" y="3" width="9.2" height="9.2" rx="1" fill="#7a1fa0"/><path d="M3 10 V5.2 L6.8 10 V5.2" fill="none" stroke="#fff" stroke-width="1.1"/></svg>
<svg style="left:691px;top:697.5px;" width="16.5" height="15.5" viewBox="0 0 16.5 15.5"><rect x="4.5" y="0.5" width="11.5" height="14" rx="1" fill="#21a366"/><rect x="10.2" y="0.5" width="5.8" height="7" fill="#33c481"/><rect x="4.5" y="7.5" width="5.7" height="7" fill="#185c37"/><rect x="10.2" y="7.5" width="5.8" height="7" fill="#107c41"/><rect x="0.3" y="3" width="9.2" height="9.2" rx="1" fill="#107c41"/><path d="M3 5.2 L6.8 10 M6.8 5.2 L3 10" stroke="#fff" stroke-width="1.1"/></svg>
<div style="left:583px;top:716px;width:4px;height:1.3px;background:#8a9098;border-radius:0.6px;"></div>
<div style="left:611.5px;top:716px;width:4px;height:1.3px;background:#8a9098;border-radius:0.6px;"></div>
<div style="left:640px;top:716px;width:4px;height:1.3px;background:#8a9098;border-radius:0.6px;"></div>
<div style="left:668.5px;top:716px;width:4px;height:1.3px;background:#8a9098;border-radius:0.6px;"></div>
<div style="left:697px;top:716px;width:4px;height:1.3px;background:#8a9098;border-radius:0.6px;"></div>
<svg style="left:883px;top:701.5px;" width="10" height="7" viewBox="0 0 10 7"><path d="M1 5.5 L5 1.5 L9 5.5" fill="none" stroke="#3a3c3e" stroke-width="1"/></svg>
<svg style="left:903px;top:699px;" width="12" height="12" viewBox="0 0 12 12"><rect x="3.5" y="0.5" width="8" height="11" rx="0.8" fill="#c060e0"/><rect x="0.3" y="2.5" width="7" height="7" rx="0.8" fill="#7a1fa0"/><path d="M2.2 8 V4.2 L5.2 8 V4.2" fill="none" stroke="#fff" stroke-width="0.9"/></svg>
<svg style="left:924px;top:698.5px;" width="13" height="13" viewBox="0 0 13 13"><circle cx="8.3" cy="3.3" r="2.2" fill="#5b5fc7"/><rect x="5" y="5" width="7.5" height="7.5" rx="2" fill="#6a70d8"/><rect x="0.5" y="3.8" width="7" height="7" rx="0.8" fill="#f0f0f8"/><path d="M2.3 5.8 H5.7 M4 5.8 V9.3" stroke="#464eb8" stroke-width="1"/></svg>
<svg style="left:946.5px;top:698.5px;" width="9" height="13" viewBox="0 0 9 13"><rect x="2.7" y="0.6" width="3.6" height="7" rx="1.8" fill="none" stroke="#3060a8" stroke-width="1"/><path d="M0.8 6 C0.8 10.5 8.2 10.5 8.2 6 M4.5 9.5 V12.3" fill="none" stroke="#3060a8" stroke-width="0.9"/></svg>
<svg style="left:966.5px;top:701px;" width="10" height="8" viewBox="0 0 10 8"><path d="M0.8 3 C3.2 0.5 6.8 0.5 9.2 3 M2.5 4.8 C4 3.4 6 3.4 7.5 4.8" fill="none" stroke="#3a3c3e" stroke-width="0.9"/><circle cx="5" cy="6.5" r="0.9" fill="#3a3c3e"/></svg>
<svg style="left:980.5px;top:700.5px;" width="11" height="9" viewBox="0 0 11 9"><path d="M0.8 3 H2.8 L5.2 0.8 V8.2 L2.8 6 H0.8 Z" fill="none" stroke="#2a2c2e" stroke-width="0.9" stroke-linejoin="round"/><path d="M6.8 2.8 C7.8 3.8 7.8 5.2 6.8 6.2 M8.3 1.5 C10 3.3 10 5.7 8.3 7.5" fill="none" stroke="#2a2c2e" stroke-width="0.8"/></svg>
<svg style="left:995.5px;top:700px;" width="14" height="10" viewBox="0 0 14 10"><rect x="2.5" y="2.5" width="9" height="5.5" rx="0.8" fill="#1c1c1c"/><rect x="11.5" y="4" width="1.4" height="2.5" fill="#1c1c1c"/><path d="M1 1 C1.5 2.5 2 3 3.5 3.2 M2.8 0.5 V3" stroke="#1c1c1c" stroke-width="1" fill="none"/></svg>
<div style="left:1056.5px;top:699px;width:12px;height:12px;background:#0b6cc4;border-radius:50%;"></div>
<svg style="left:15.9px;top:545.2px;" width="129" height="129" viewBox="0 0 129 129"><defs><clipPath id="cc"><circle cx="64.5" cy="64.5" r="64.5"/></clipPath>
<linearGradient id="cbg" x1="0" y1="0" x2="1" y2="0"><stop offset="0" stop-color="#9f9b94"/><stop offset="0.3" stop-color="#bdbab4"/><stop offset="0.6" stop-color="#c8c7c3"/><stop offset="1" stop-color="#b7b6b3"/></linearGradient>
<linearGradient id="cwl" x1="0" y1="0" x2="1" y2="0"><stop offset="0" stop-color="#8a867f"/><stop offset="0.3" stop-color="#9e9a93"/><stop offset="0.62" stop-color="#a9a7a2"/><stop offset="1" stop-color="#b2b0ac"/></linearGradient>
<linearGradient id="csh" x1="0" y1="0" x2="0" y2="1"><stop offset="0" stop-color="#3173be"/><stop offset="1" stop-color="#215aa2"/></linearGradient>
<linearGradient id="chr" x1="0" y1="0" x2="1" y2="0"><stop offset="0" stop-color="#6a4a3c"/><stop offset="0.3" stop-color="#55392e"/><stop offset="0.7" stop-color="#5c3e32"/><stop offset="1" stop-color="#4a3128"/></linearGradient>
<filter id="cb" x="-5%" y="-5%" width="110%" height="110%"><feGaussianBlur stdDeviation="0.7"/></filter></defs>
<g clip-path="url(#cc)"><g filter="url(#cb)">
<rect x="-3" y="-3" width="135" height="135" fill="url(#cbg)"/>
<rect x="-3" y="59.9" width="135" height="80" fill="url(#cwl)"/>
<rect x="78.7" y="72.4" width="38" height="33" fill="#f3f5f7"/>
<rect x="82.8" y="72.4" width="8.2" height="33" fill="#c9cbcc"/>
<rect x="74" y="68" width="60" height="4.4" fill="#d0d0cd"/>
<path d="M116.1 108.5 C111.1 92.8 119.1 72.8 125.1 64.8 L134.2 64.8 L134.2 108.5 Z" fill="#3c463c"/>
<circle cx="123.1" cy="70.8" r="3" fill="#9a4a34"/><circle cx="125.6" cy="78.8" r="2.2" fill="#a85a3c"/><circle cx="119.1" cy="88.8" r="1.6" fill="#d8d8d0"/><circle cx="122.1" cy="96.8" r="1.5" fill="#c8c8c0"/>
<ellipse cx="89.8" cy="8.4" rx="7.2" ry="3.6" transform="rotate(52 89.8 8.4)" fill="#1c1c1c"/>
<ellipse cx="64" cy="-1.5" rx="11" ry="2.6" fill="#222"/>
<circle cx="34.0" cy="14.2" r="1.6" fill="#d4d2cc"/>
<path d="M1.9 100.8 C11.6 94.0 21.3 91.0 31.0 89.7 L46.6 90.5 C52.4 95.9 61.2 95.9 67.0 90.5 L79.7 90.1 C93.3 92.0 104.9 97.9 112.7 109.5 L118.5 134.8 L1.9 134.8 Z" fill="url(#csh)"/>
<rect x="45.0" y="78.4" width="24.1" height="14" fill="#3e271f"/>
<path d="M49.1 73.5 L49.1 92.0 C53.4 96.3 61.2 96.3 65.7 91.6 L65.7 73.5 Z" fill="#b58676"/>
<path d="M54.4 25.5 C43.7 25.9 38.4 32.7 37.3 47.3 C35.3 64.8 33.0 78.4 30.1 94.0 C28.3 103.7 29.5 109.9 32.6 113.0 C39.8 111.9 45.0 108.5 46.2 102.7 L46.2 80.4 L67.6 80.4 L69.2 101.7 C71.1 108.5 76.7 111.1 82.8 110.3 C85.9 103.7 83.5 92.0 80.2 78.4 C78.3 66.7 77.3 53.1 74.6 41.5 C71.1 29.8 64.1 25.5 54.4 25.5 Z" fill="url(#chr)"/>
<path d="M54.8 31.4 C45.0 31.4 40.0 38.5 39.6 51.2 C39.6 61.9 42.7 71.6 49.1 77.2 C52.4 80.0 57.3 80.0 60.6 77.2 C67.6 71.6 70.7 61.9 70.7 51.2 C70.3 38.5 64.5 31.4 54.8 31.4 Z" fill="#c99f90"/>
<ellipse cx="54.8" cy="39.5" rx="11" ry="6" fill="#d0a898"/>
<ellipse cx="54.4" cy="59.9" rx="9" ry="6" fill="#cf9a90"/>
<rect x="39.2" y="46.9" width="31.1" height="0.9" fill="#9a98a2"/>
<rect x="40.4" y="47.3" width="12.5" height="6.8" rx="2" fill="#b8b4c4" fill-opacity="0.5" stroke="#9896a2" stroke-width="0.6"/>
<rect x="56.7" y="47.3" width="12.5" height="6.8" rx="2" fill="#b8b4c4" fill-opacity="0.5" stroke="#9896a2" stroke-width="0.6"/>
<ellipse cx="47.0" cy="50.8" rx="2" ry="1" fill="#4a3a38"/><ellipse cx="62.5" cy="50.8" rx="2" ry="1" fill="#4a3a38"/>
<ellipse cx="53.6" cy="65.2" rx="4.2" ry="1.3" fill="#a8625e"/>
</g></g></svg>
<svg style="left:127.5px;top:163.5px;" width="9" height="13" viewBox="0 0 9 13"><path d="M0.8 0.8 V10.2 L3 8.2 L4.6 11.8 L6 11.2 L4.5 7.7 H7.6 Z" fill="#ffffff" stroke="#6a6a6a" stroke-width="0.7" stroke-linejoin="round"/></svg>
<span style="left:Nonepx;top:143.17px;font-size:9.2px;color:#e4e4e2;transform:scaleX(0.9999);left:17.2px;width:41.56px;text-align:center;">A</span>
<span style="left:Nonepx;top:143.17px;font-size:9.2px;color:#e4e4e2;transform:scaleX(0.9999);left:58.76px;width:41.56px;text-align:center;">B</span>
<span style="left:Nonepx;top:143.17px;font-size:9.2px;color:#e4e4e2;transform:scaleX(0.9999);left:100.32px;width:41.56px;text-align:center;">C</span>
<span style="left:Nonepx;top:143.17px;font-size:9.2px;color:#e4e4e2;transform:scaleX(0.9999);left:141.88px;width:41.56px;text-align:center;">D</span>
<span style="left:Nonepx;top:143.17px;font-size:9.2px;color:#e4e4e2;transform:scaleX(0.9999);left:183.44px;width:41.56px;text-align:center;">E</span>
<span style="left:Nonepx;top:143.17px;font-size:9.2px;color:#e4e4e2;transform:scaleX(0.9999);left:225.0px;width:41.56px;text-align:center;">F</span>
<span style="left:Nonepx;top:143.17px;font-size:9.2px;color:#e4e4e2;transform:scaleX(0.9999);left:266.56px;width:41.56px;text-align:center;">G</span>
<span style="left:Nonepx;top:143.17px;font-size:9.2px;color:#e4e4e2;transform:scaleX(0.9999);left:308.12px;width:41.56px;text-align:center;">H</span>
<span style="left:Nonepx;top:143.17px;font-size:9.2px;color:#e4e4e2;transform:scaleX(0.9999);left:349.68px;width:41.56px;text-align:center;">I</span>
<span style="left:Nonepx;top:143.17px;font-size:9.2px;color:#e4e4e2;transform:scaleX(0.9999);left:391.24px;width:41.56px;text-align:center;">J</span>
<span style="left:Nonepx;top:143.17px;font-size:9.2px;color:#e4e4e2;transform:scaleX(0.9999);left:432.8px;width:41.56px;text-align:center;">K</span>
<span style="left:Nonepx;top:143.17px;font-size:9.2px;color:#e4e4e2;transform:scaleX(0.9999);left:474.36px;width:41.56px;text-align:center;">L</span>
<span style="left:Nonepx;top:143.17px;font-size:9.2px;color:#e4e4e2;transform:scaleX(0.9999);left:515.92px;width:41.56px;text-align:center;">M</span>
<span style="left:Nonepx;top:143.17px;font-size:9.2px;color:#e4e4e2;transform:scaleX(0.9999);left:557.48px;width:41.56px;text-align:center;">N</span>
<span style="left:Nonepx;top:143.17px;font-size:9.2px;color:#e4e4e2;transform:scaleX(0.9999);left:599.04px;width:41.56px;text-align:center;">O</span>
<span style="left:Nonepx;top:143.17px;font-size:9.2px;color:#e4e4e2;transform:scaleX(0.9999);left:640.6px;width:41.56px;text-align:center;">P</span>
<span style="left:Nonepx;top:143.17px;font-size:9.2px;color:#e4e4e2;transform:scaleX(0.9999);left:682.16px;width:41.56px;text-align:center;">Q</span>
<span style="left:Nonepx;top:143.17px;font-size:9.2px;color:#e4e4e2;transform:scaleX(0.9999);left:723.72px;width:41.56px;text-align:center;">R</span>
<span style="left:Nonepx;top:143.17px;font-size:9.2px;color:#e4e4e2;transform:scaleX(0.9999);left:765.28px;width:41.56px;text-align:center;">S</span>
<span style="left:Nonepx;top:143.17px;font-size:9.2px;color:#e4e4e2;transform:scaleX(0.9999);left:806.84px;width:41.56px;text-align:center;">T</span>
<span style="left:Nonepx;top:143.17px;font-size:9.2px;color:#e4e4e2;transform:scaleX(0.9999);left:848.4px;width:41.56px;text-align:center;">U</span>
<span style="left:Nonepx;top:143.17px;font-size:9.2px;color:#e4e4e2;transform:scaleX(0.9999);left:889.96px;width:41.56px;text-align:center;">V</span>
<span style="left:Nonepx;top:143.17px;font-size:9.2px;color:#e4e4e2;transform:scaleX(0.9999);left:931.52px;width:41.56px;text-align:center;">W</span>
<span style="left:Nonepx;top:143.17px;font-size:9.2px;color:#e4e4e2;transform:scaleX(0.9999);left:973.08px;width:41.56px;text-align:center;">X</span>
<span style="left:Nonepx;top:143.17px;font-size:9.2px;color:#e4e4e2;transform:scaleX(0.9999);left:1014.64px;width:41.56px;text-align:center;">Y</span>
<span style="left:Nonepx;top:155.75px;font-size:9.2px;color:#e4e4e2;transform:scaleX(0.9999);left:0;width:17.5px;text-align:center;transform:scaleX(0.93);transform-origin:50% 50%;">1</span>
<span style="left:Nonepx;top:168.3px;font-size:9.2px;color:#e4e4e2;transform:scaleX(0.9999);left:0;width:17.5px;text-align:center;transform:scaleX(0.93);transform-origin:50% 50%;">2</span>
<span style="left:Nonepx;top:180.85px;font-size:9.2px;color:#e4e4e2;transform:scaleX(0.9999);left:0;width:17.5px;text-align:center;transform:scaleX(0.93);transform-origin:50% 50%;">3</span>
<span style="left:Nonepx;top:193.41px;font-size:9.2px;color:#e4e4e2;transform:scaleX(0.9999);left:0;width:17.5px;text-align:center;transform:scaleX(0.93);transform-origin:50% 50%;">4</span>
<span style="left:Nonepx;top:205.96px;font-size:9.2px;color:#e4e4e2;transform:scaleX(0.9999);left:0;width:17.5px;text-align:center;transform:scaleX(0.93);transform-origin:50% 50%;">5</span>
<span style="left:Nonepx;top:218.52px;font-size:9.2px;color:#e4e4e2;transform:scaleX(0.9999);left:0;width:17.5px;text-align:center;transform:scaleX(0.93);transform-origin:50% 50%;">6</span>
<span style="left:Nonepx;top:231.07px;font-size:9.2px;color:#e4e4e2;transform:scaleX(0.9999);left:0;width:17.5px;text-align:center;transform:scaleX(0.93);transform-origin:50% 50%;">7</span>
<span style="left:Nonepx;top:243.62px;font-size:9.2px;color:#e4e4e2;transform:scaleX(0.9999);left:0;width:17.5px;text-align:center;transform:scaleX(0.93);transform-origin:50% 50%;">8</span>
<span style="left:Nonepx;top:256.18px;font-size:9.2px;color:#e4e4e2;transform:scaleX(0.9999);left:0;width:17.5px;text-align:center;transform:scaleX(0.93);transform-origin:50% 50%;">9</span>
<span style="left:Nonepx;top:268.73px;font-size:9.2px;color:#e4e4e2;transform:scaleX(0.9999);left:0;width:17.5px;text-align:center;transform:scaleX(0.93);transform-origin:50% 50%;">10</span>
<span style="left:Nonepx;top:281.29px;font-size:9.2px;color:#e4e4e2;transform:scaleX(0.9999);left:0;width:17.5px;text-align:center;transform:scaleX(0.93);transform-origin:50% 50%;">11</span>
<span style="left:Nonepx;top:293.84px;font-size:9.2px;color:#e4e4e2;transform:scaleX(0.9999);left:0;width:17.5px;text-align:center;transform:scaleX(0.93);transform-origin:50% 50%;">12</span>
<span style="left:Nonepx;top:306.39px;font-size:9.2px;color:#e4e4e2;transform:scaleX(0.9999);left:0;width:17.5px;text-align:center;transform:scaleX(0.93);transform-origin:50% 50%;">13</span>
<span style="left:Nonepx;top:318.95px;font-size:9.2px;color:#e4e4e2;transform:scaleX(0.9999);left:0;width:17.5px;text-align:center;transform:scaleX(0.93);transform-origin:50% 50%;">14</span>
<span style="left:Nonepx;top:331.5px;font-size:9.2px;color:#e4e4e2;transform:scaleX(0.9999);left:0;width:17.5px;text-align:center;transform:scaleX(0.93);transform-origin:50% 50%;">15</span>
<span style="left:Nonepx;top:344.06px;font-size:9.2px;color:#e4e4e2;transform:scaleX(0.9999);left:0;width:17.5px;text-align:center;transform:scaleX(0.93);transform-origin:50% 50%;">16</span>
<span style="left:Nonepx;top:356.61px;font-size:9.2px;color:#e4e4e2;transform:scaleX(0.9999);left:0;width:17.5px;text-align:center;transform:scaleX(0.93);transform-origin:50% 50%;">17</span>
<span style="left:Nonepx;top:369.16px;font-size:9.2px;color:#e4e4e2;transform:scaleX(0.9999);left:0;width:17.5px;text-align:center;transform:scaleX(0.93);transform-origin:50% 50%;">18</span>
<span style="left:Nonepx;top:381.72px;font-size:9.2px;color:#e4e4e2;transform:scaleX(0.9999);left:0;width:17.5px;text-align:center;transform:scaleX(0.93);transform-origin:50% 50%;">19</span>
<span style="left:Nonepx;top:394.27px;font-size:9.2px;color:#e4e4e2;transform:scaleX(0.9999);left:0;width:17.5px;text-align:center;transform:scaleX(0.93);transform-origin:50% 50%;">20</span>
<span style="left:Nonepx;top:406.83px;font-size:9.2px;color:#e4e4e2;transform:scaleX(0.9999);left:0;width:17.5px;text-align:center;transform:scaleX(0.93);transform-origin:50% 50%;">21</span>
<span style="left:Nonepx;top:419.38px;font-size:9.2px;color:#e4e4e2;transform:scaleX(0.9999);left:0;width:17.5px;text-align:center;transform:scaleX(0.93);transform-origin:50% 50%;">22</span>
<span style="left:Nonepx;top:431.93px;font-size:9.2px;color:#e4e4e2;transform:scaleX(0.9999);left:0;width:17.5px;text-align:center;transform:scaleX(0.93);transform-origin:50% 50%;">23</span>
<span style="left:Nonepx;top:444.49px;font-size:9.2px;color:#e4e4e2;transform:scaleX(0.9999);left:0;width:17.5px;text-align:center;transform:scaleX(0.93);transform-origin:50% 50%;">24</span>
<span style="left:Nonepx;top:457.04px;font-size:9.2px;color:#e4e4e2;transform:scaleX(0.9999);left:0;width:17.5px;text-align:center;transform:scaleX(0.93);transform-origin:50% 50%;">25</span>
<span style="left:Nonepx;top:469.6px;font-size:9.2px;color:#e4e4e2;transform:scaleX(0.9999);left:0;width:17.5px;text-align:center;transform:scaleX(0.93);transform-origin:50% 50%;">26</span>
<span style="left:Nonepx;top:482.15px;font-size:9.2px;color:#e4e4e2;transform:scaleX(0.9999);left:0;width:17.5px;text-align:center;transform:scaleX(0.93);transform-origin:50% 50%;">27</span>
<span style="left:Nonepx;top:494.71px;font-size:9.2px;color:#e4e4e2;transform:scaleX(0.9999);left:0;width:17.5px;text-align:center;transform:scaleX(0.93);transform-origin:50% 50%;">28</span>
<span style="left:Nonepx;top:507.26px;font-size:9.2px;color:#e4e4e2;transform:scaleX(0.9999);left:0;width:17.5px;text-align:center;transform:scaleX(0.93);transform-origin:50% 50%;">29</span>
<span style="left:Nonepx;top:519.81px;font-size:9.2px;color:#e4e4e2;transform:scaleX(0.9999);left:0;width:17.5px;text-align:center;transform:scaleX(0.93);transform-origin:50% 50%;">30</span>
<span style="left:Nonepx;top:532.37px;font-size:9.2px;color:#e4e4e2;transform:scaleX(0.9999);left:0;width:17.5px;text-align:center;transform:scaleX(0.93);transform-origin:50% 50%;">31</span>
<span style="left:Nonepx;top:544.92px;font-size:9.2px;color:#e4e4e2;transform:scaleX(0.9999);left:0;width:17.5px;text-align:center;transform:scaleX(0.93);transform-origin:50% 50%;">32</span>
<span style="left:Nonepx;top:557.48px;font-size:9.2px;color:#e4e4e2;transform:scaleX(0.9999);left:0;width:17.5px;text-align:center;transform:scaleX(0.93);transform-origin:50% 50%;">33</span>
<span style="left:Nonepx;top:570.03px;font-size:9.2px;color:#e4e4e2;transform:scaleX(0.9999);left:0;width:17.5px;text-align:center;transform:scaleX(0.93);transform-origin:50% 50%;">34</span>
<span style="left:Nonepx;top:582.58px;font-size:9.2px;color:#e4e4e2;transform:scaleX(0.9999);left:0;width:17.5px;text-align:center;transform:scaleX(0.93);transform-origin:50% 50%;">35</span>
<span style="left:Nonepx;top:595.14px;font-size:9.2px;color:#e4e4e2;transform:scaleX(0.9999);left:0;width:17.5px;text-align:center;transform:scaleX(0.93);transform-origin:50% 50%;">36</span>
<span style="left:Nonepx;top:607.69px;font-size:9.2px;color:#e4e4e2;transform:scaleX(0.9999);left:0;width:17.5px;text-align:center;transform:scaleX(0.93);transform-origin:50% 50%;">37</span>
<span style="left:Nonepx;top:620.25px;font-size:9.2px;color:#e4e4e2;transform:scaleX(0.9999);left:0;width:17.5px;text-align:center;transform:scaleX(0.93);transform-origin:50% 50%;">38</span>
<span style="left:Nonepx;top:632.8px;font-size:9.2px;color:#e4e4e2;transform:scaleX(0.9999);left:0;width:17.5px;text-align:center;transform:scaleX(0.93);transform-origin:50% 50%;">39</span>
<span style="left:Nonepx;top:645.35px;font-size:9.2px;color:#e4e4e2;transform:scaleX(0.9999);left:0;width:17.5px;text-align:center;transform:scaleX(0.93);transform-origin:50% 50%;">40</span>
<span style="left:101.6px;top:155.1px;font-size:9.3px;color:#8f8579;font-weight:700;transform:scaleX(0.9999);">I</span>
<span style="left:101.8px;top:168.14px;font-size:8.9px;color:#141414;transform:scaleX(1.0774);">think</span>
<span style="left:101.8px;top:180.46px;font-size:9.4px;color:#141414;transform:scaleX(0.7948);">CASC</span>
<span style="left:101.8px;top:193.25px;font-size:8.9px;color:#141414;transform:scaleX(0.8877);">is</span>
<span style="left:101.8px;top:205.8px;font-size:8.9px;color:#141414;transform:scaleX(1.0062);">awesome.</span>
<span style="left:101.6px;top:217.87px;font-size:9.3px;color:#8f8579;font-weight:700;transform:scaleX(0.9999);">I</span>
<span style="left:101.8px;top:230.91px;font-size:8.9px;color:#141414;transform:scaleX(1.0485);">particularly</span>
<span style="left:101.8px;top:243.46px;font-size:8.9px;color:#141414;transform:scaleX(1.0258);">love</span>
<span style="left:101.8px;top:256.02px;font-size:8.9px;color:#141414;transform:scaleX(1.0695);">the</span>
<span style="left:101.8px;top:268.57px;font-size:8.9px;color:#141414;transform:scaleX(1.0205);">people</span>
<span style="left:101.6px;top:280.64px;font-size:9.3px;color:#8f8579;font-weight:700;transform:scaleX(0.9999);">I</span>
<span style="left:101.8px;top:293.68px;font-size:8.9px;color:#141414;transform:scaleX(1.0774);">work</span>
<span style="left:101.8px;top:306.23px;font-size:8.9px;color:#141414;transform:scaleX(1.0889);">with</span>
<span style="left:101.8px;top:318.79px;font-size:8.9px;color:#141414;transform:scaleX(0.9925);">and</span>
<span style="left:101.8px;top:331.34px;font-size:8.9px;color:#141414;transform:scaleX(0.9479);">am</span>
<span style="left:101.8px;top:343.9px;font-size:8.9px;color:#141414;transform:scaleX(1.0193);">regularly</span>
<span style="left:101.8px;top:356.45px;font-size:8.9px;color:#141414;transform:scaleX(0.9939);">impressed</span>
<span style="left:101.8px;top:369.0px;font-size:8.9px;color:#141414;transform:scaleX(1.0348);">by</span>
<span style="left:101.8px;top:381.56px;font-size:8.9px;color:#141414;transform:scaleX(1.0695);">the</span>
<span style="left:101.8px;top:394.11px;font-size:8.9px;color:#141414;transform:scaleX(1.0554);">commitment</span>
<span style="left:101.8px;top:406.67px;font-size:8.9px;color:#141414;transform:scaleX(0.9925);">and</span>
<span style="left:101.8px;top:419.22px;font-size:8.9px;color:#141414;transform:scaleX(1.0339);">creativity</span>
<span style="left:101.8px;top:431.77px;font-size:8.9px;color:#141414;transform:scaleX(1.1073);">of</span>
<span style="left:101.8px;top:444.33px;font-size:8.9px;color:#141414;transform:scaleX(0.9899);">teachers</span>
<span style="left:101.8px;top:456.88px;font-size:8.9px;color:#141414;transform:scaleX(0.9925);">and</span>
<span style="left:101.8px;top:469.44px;font-size:8.9px;color:#141414;transform:scaleX(1.0648);">staff</span>
<span style="left:101.8px;top:481.99px;font-size:8.9px;color:#141414;transform:scaleX(1.0514);">:)</span>
<span style="left:31px;top:12.25px;font-size:8.8px;color:#696a67;transform:scaleX(0.8518);">AutoSave</span>
<span style="left:83px;top:12.85px;font-size:7.5px;color:#62635f;transform:scaleX(0.9115);">Off</span>
<span style="left:195.6px;top:12.25px;font-size:8.8px;color:#5e5f5c;transform:scaleX(0.8518);">Book1  -  Excel</span>
<span style="left:432px;top:12.25px;font-size:8.8px;color:#585956;transform:scaleX(0.879);">Search</span>
<span style="left:861.4px;top:12.25px;font-size:8.8px;color:#535451;transform:scaleX(0.8376);">Powell, Carrie (CASC Admin)</span>
<span style="left:14px;top:37.87px;font-size:9.2px;color:#f0f0ee;transform:scaleX(0.8777);">File</span>
<span style="left:43.5px;top:37.87px;font-size:9.2px;color:#f0f0ee;transform:scaleX(0.9913);">Home</span>
<span style="left:80.5px;top:37.87px;font-size:9.2px;color:#f0f0ee;transform:scaleX(0.892);">Insert</span>
<span style="left:114px;top:37.87px;font-size:9.2px;color:#f0f0ee;transform:scaleX(0.909);">Draw</span>
<span style="left:146px;top:37.87px;font-size:9.2px;color:#f0f0ee;transform:scaleX(0.8914);">Page Layout</span>
<span style="left:205.5px;top:37.87px;font-size:9.2px;color:#f0f0ee;transform:scaleX(0.914);">Formulas</span>
<span style="left:253px;top:37.87px;font-size:9.2px;color:#f0f0ee;transform:scaleX(0.9011);">Data</span>
<span style="left:282.5px;top:37.87px;font-size:9.2px;color:#f0f0ee;transform:scaleX(0.8798);">Review</span>
<span style="left:321.5px;top:37.87px;font-size:9.2px;color:#f0f0ee;transform:scaleX(0.9115);">View</span>
<span style="left:352.5px;top:37.87px;font-size:9.2px;color:#f0f0ee;transform:scaleX(0.9536);">Automate</span>
<span style="left:403px;top:37.87px;font-size:9.2px;color:#f0f0ee;transform:scaleX(0.8993);">Help</span>
<span style="left:969.3px;top:37.37px;font-size:9.2px;color:#f4f4f2;transform:scaleX(0.9163);">Comments</span>
<span style="left:1037.5px;top:37.37px;font-size:9.2px;color:#16221b;transform:scaleX(0.8561);">Share</span>
<span style="left:18px;top:79.58px;font-size:8.3px;color:#e6e6e4;transform:scaleX(0.8248);">Paste</span>
<span style="left:20px;top:105.66px;font-size:7.7px;color:#e2e2e0;transform:scaleX(0.8966);">Clipboard</span>
<span style="left:79.3px;top:62.99px;font-size:8.5px;color:#e6e6e4;transform:scaleX(0.8717);">Calibri</span>
<span style="left:160px;top:62.99px;font-size:8.5px;color:#e6e6e4;transform:scaleX(0.8496);">11</span>
<span style="left:190px;top:61.44px;font-size:11px;color:#e6e6e4;transform:scaleX(0.9999);">A</span>
<span style="left:196.2px;top:59.54px;font-size:6px;color:#7ab0e0;transform:scaleX(0.9999);">^</span>
<span style="left:207.5px;top:62.63px;font-size:9.5px;color:#e6e6e4;transform:scaleX(0.9999);">A</span>
<span style="left:213px;top:59.58px;font-size:7px;color:#7ab0e0;transform:scaleX(0.9999);">ˇ</span>
<span style="left:82.8px;top:82.64px;font-size:8.6px;color:#e6e6e4;font-weight:700;transform:scaleX(0.9999);">B</span>
<span style="left:100px;top:82.22px;font-size:9.3px;color:#e6e6e4;font-style:italic;font-family:'Liberation Serif', serif;transform:scaleX(0.9999);">I</span>
<span style="left:115.3px;top:82.02px;font-size:9.3px;color:#e6e6e4;transform:scaleX(0.9999);">U</span>
<span style="left:198px;top:80.93px;font-size:9.5px;color:#e6e6e4;transform:scaleX(0.9999);">A</span>
<span style="left:136px;top:105.66px;font-size:7.7px;color:#e2e2e0;transform:scaleX(0.9292);">Font</span>
<span style="left:338.3px;top:62.58px;font-size:8.3px;color:#e6e6e4;transform:scaleX(0.9178);">Wrap Text</span>
<span style="left:338.3px;top:83.38px;font-size:8.3px;color:#e6e6e4;transform:scaleX(0.9271);">Merge &amp; Center</span>
<span style="left:298px;top:105.66px;font-size:7.7px;color:#e2e2e0;transform:scaleX(0.9069);">Alignment</span>
<span style="left:421px;top:62.99px;font-size:8.5px;color:#e6e6e4;transform:scaleX(0.8265);">General</span>
<span style="left:424px;top:82.17px;font-size:10.5px;color:#e6e6e4;transform:scaleX(0.9999);">$</span>
<span style="left:447.5px;top:81.94px;font-size:11px;color:#e6e6e4;transform:scaleX(0.9999);">%</span>
<span style="left:467.5px;top:78.56px;font-size:14px;color:#e6e6e4;font-weight:700;font-family:'Liberation Serif', serif;transform:scaleX(0.9999);">,</span>
<span style="left:484.5px;top:81.81px;font-size:5.2px;color:#7ab0e0;transform:scaleX(0.9999);letter-spacing:-0.2px;">←.0</span>
<span style="left:486.5px;top:87.11px;font-size:5.2px;color:#c8c8c6;transform:scaleX(0.9999);">.00</span>
<span style="left:501.5px;top:81.81px;font-size:5.2px;color:#c8c8c6;transform:scaleX(0.9999);">.00</span>
<span style="left:499.5px;top:87.11px;font-size:5.2px;color:#7ab0e0;transform:scaleX(0.9999);letter-spacing:-0.2px;">→.0</span>
<span style="left:448px;top:105.66px;font-size:7.7px;color:#e2e2e0;transform:scaleX(0.8961);">Number</span>
<span style="left:528px;top:79.48px;font-size:8.3px;color:#e6e6e4;transform:scaleX(0.9467);">Conditional</span>
<span style="left:525px;top:89.58px;font-size:8.3px;color:#e6e6e4;transform:scaleX(0.9457);">Formatting</span>
<span style="left:575px;top:79.48px;font-size:8.3px;color:#e6e6e4;transform:scaleX(0.9182);">Format as</span>
<span style="left:580px;top:89.58px;font-size:8.3px;color:#e6e6e4;transform:scaleX(0.8316);">Table</span>
<span style="left:620px;top:79.48px;font-size:8.3px;color:#e6e6e4;transform:scaleX(0.9444);">Cell</span>
<span style="left:613px;top:89.58px;font-size:8.3px;color:#e6e6e4;transform:scaleX(0.8632);">Styles</span>
<span style="left:574px;top:105.66px;font-size:7.7px;color:#e2e2e0;transform:scaleX(0.8359);">Styles</span>
<span style="left:656px;top:79.68px;font-size:8.3px;color:#e6e6e4;transform:scaleX(0.9295);">Insert</span>
<span style="left:683px;top:79.68px;font-size:8.3px;color:#e6e6e4;transform:scaleX(0.8882);">Delete</span>
<span style="left:710px;top:79.68px;font-size:8.3px;color:#e6e6e4;transform:scaleX(0.9247);">Format</span>
<span style="left:687px;top:105.66px;font-size:7.7px;color:#e2e2e0;transform:scaleX(0.8366);">Cells</span>
<span style="left:749.5px;top:55.75px;font-size:12.5px;color:#e6e6e4;transform:scaleX(0.9999);">Σ</span>
<span style="left:777.5px;top:57.09px;font-size:8.5px;color:#4a9fe0;transform:scaleX(0.9999);">A</span>
<span style="left:777.5px;top:66.59px;font-size:8.5px;color:#e6e6e4;transform:scaleX(0.9999);">Z</span>
<span style="left:776px;top:79.48px;font-size:8.3px;color:#e6e6e4;transform:scaleX(0.9757);">Sort &amp;</span>
<span style="left:775px;top:89.58px;font-size:8.3px;color:#e6e6e4;transform:scaleX(0.8679);">Filter</span>
<span style="left:805px;top:79.48px;font-size:8.3px;color:#e6e6e4;transform:scaleX(0.9716);">Find &amp;</span>
<span style="left:803px;top:89.58px;font-size:8.3px;color:#e6e6e4;transform:scaleX(0.889);">Select</span>
<span style="left:779px;top:105.66px;font-size:7.7px;color:#e2e2e0;transform:scaleX(0.8718);">Editing</span>
<span style="left:844px;top:79.48px;font-size:8.3px;color:#6e6f6c;transform:scaleX(0.9102);">Sensitivity</span>
<span style="left:846px;top:105.66px;font-size:7.7px;color:#e2e2e0;transform:scaleX(0.8756);">Sensitivity</span>
<span style="left:892px;top:79.48px;font-size:8.3px;color:#e6e6e4;transform:scaleX(0.9702);">Add-ins</span>
<span style="left:893px;top:105.66px;font-size:7.7px;color:#e2e2e0;transform:scaleX(0.9319);">Add-ins</span>
<span style="left:932px;top:79.48px;font-size:8.3px;color:#e6e6e4;transform:scaleX(0.8907);">Analyze</span>
<span style="left:937px;top:89.58px;font-size:8.3px;color:#e6e6e4;transform:scaleX(0.9299);">Data</span>
<span style="left:988px;top:79.48px;font-size:8.3px;color:#e6e6e4;transform:scaleX(0.9008);">MSI</span>
<span style="left:975px;top:89.58px;font-size:8.3px;color:#e6e6e4;transform:scaleX(0.8831);">Courseware</span>
<span style="left:967px;top:105.66px;font-size:7.7px;color:#e2e2e0;transform:scaleX(0.8837);">Commands Group</span>
<span style="left:8.5px;top:124.41px;font-size:9.1px;color:#ecece9;transform:scaleX(0.8934);">F27</span>
<span style="left:119.8px;top:122.25px;font-size:12.5px;color:#e8e8e6;font-style:italic;font-family:'Liberation Serif', serif;transform:scaleX(0.9999);">f</span>
<span style="left:124.6px;top:126.09px;font-size:8.5px;color:#e8e8e6;font-style:italic;font-family:'Liberation Serif', serif;transform:scaleX(0.9999);">x</span>
<span style="left:8px;top:678.84px;font-size:7.3px;color:#e8e8e6;transform:scaleX(0.8676);">Ready</span>
<span style="left:49.5px;top:678.84px;font-size:7.3px;color:#e8e8e6;transform:scaleX(0.9174);">Accessibility: Good to go</span>
<span style="left:830px;top:678.84px;font-size:7.3px;color:#e8e8e6;transform:scaleX(0.8753);">Display Settings</span>
<span style="left:1058.5px;top:678.84px;font-size:7.3px;color:#e8e8e6;transform:scaleX(0.9266);">100%</span>
<span style="left:24.3px;top:696.41px;font-size:6.5px;color:#fff;font-weight:700;transform:scaleX(0.9999);">1</span>
<span style="left:33.5px;top:696.9px;font-size:7.6px;color:#2a2c2e;transform:scaleX(0.9303);">49°F</span>
<span style="left:33.5px;top:707.3px;font-size:7.6px;color:#50555a;transform:scaleX(1.0121);">Partly sunny</span>
<span style="left:422px;top:701.34px;font-size:8.6px;color:#55595d;transform:scaleX(0.9658);">Search</span>
<span style="left:1022.5px;top:696.71px;font-size:7.8px;color:#2a2c2e;transform:scaleX(0.936);">11:19 AM</span>
<span style="left:1017px;top:707.11px;font-size:7.8px;color:#2a2c2e;transform:scaleX(1.0322);">12/8/2023</span>
<span style="left:1058.5px;top:701.7px;font-size:7.6px;color:#fff;transform:scaleX(0.9465);">19</span>
</div></body></html>
